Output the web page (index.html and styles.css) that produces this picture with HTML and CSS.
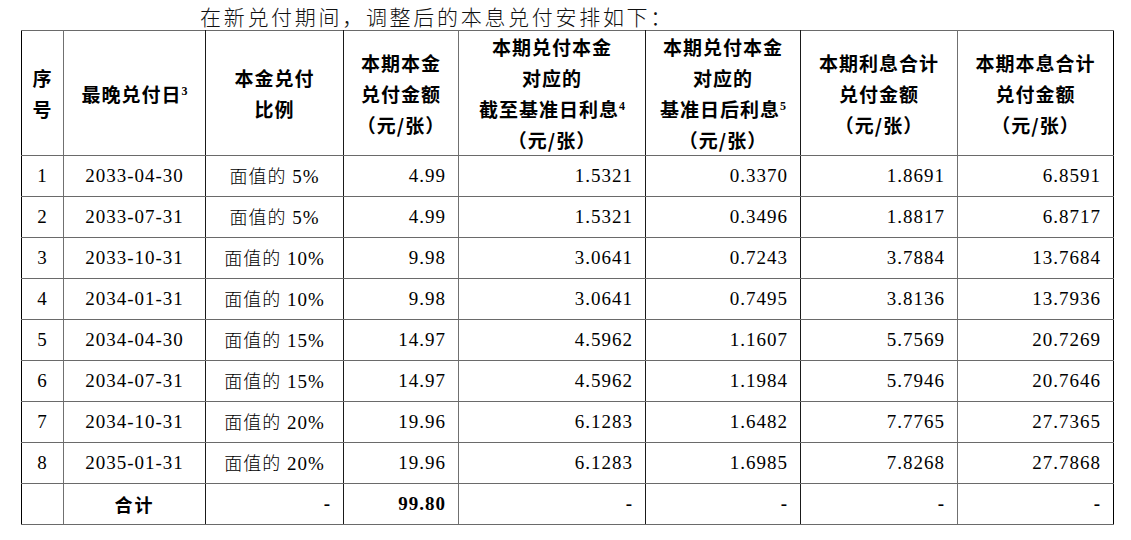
FILE: index.html
```html
<!DOCTYPE html>
<html lang="zh">
<head>
<meta charset="utf-8">
<link rel="stylesheet" href="styles.css">
</head>
<body>
<div class="page">
  <p class="intro">在新兑付期间，调整后的本息兑付安排如下：</p>
  <table class="sched">
    <colgroup>
      <col class="c1"><col class="c2"><col class="c3"><col class="c4"><col class="c5"><col class="c6"><col class="c7"><col class="c8">
    </colgroup>
    <thead>
      <tr>
        <th class="v-gray">序<br>号</th>
        <th class="v-dark">最晚兑付日<sup>3</sup></th>
        <th class="v-dark">本金兑付<br>比例</th>
        <th class="v-gray">本期本金<br>兑付金额<br>（元/张）</th>
        <th class="v-dark">本期兑付本金<br>对应的<br>截至基准日利息<sup>4</sup><br>（元/张）</th>
        <th class="v-dark">本期兑付本金<br>对应的<br>基准日后利息<sup>5</sup><br>（元/张）</th>
        <th class="v-gray">本期利息合计<br>兑付金额<br>（元/张）</th>
        <th>本期本息合计<br>兑付金额<br>（元/张）</th>
      </tr>
    </thead>
    <tbody>
      <tr><td class="ctr v-gray">1</td><td class="ctr v-dark">2033-04-30</td><td class="ctr v-dark"><span class="han">面值的</span> 5%</td><td class="num v-gray">4.99</td><td class="num v-dark">1.5321</td><td class="num v-dark">0.3370</td><td class="num v-gray">1.8691</td><td class="num">6.8591</td></tr>
      <tr><td class="ctr v-gray">2</td><td class="ctr v-dark">2033-07-31</td><td class="ctr v-dark"><span class="han">面值的</span> 5%</td><td class="num v-gray">4.99</td><td class="num v-dark">1.5321</td><td class="num v-dark">0.3496</td><td class="num v-gray">1.8817</td><td class="num">6.8717</td></tr>
      <tr><td class="ctr v-gray">3</td><td class="ctr v-dark">2033-10-31</td><td class="ctr v-dark"><span class="han">面值的</span> 10%</td><td class="num v-gray">9.98</td><td class="num v-dark">3.0641</td><td class="num v-dark">0.7243</td><td class="num v-gray">3.7884</td><td class="num">13.7684</td></tr>
      <tr><td class="ctr v-gray">4</td><td class="ctr v-dark">2034-01-31</td><td class="ctr v-dark"><span class="han">面值的</span> 10%</td><td class="num v-gray">9.98</td><td class="num v-dark">3.0641</td><td class="num v-dark">0.7495</td><td class="num v-gray">3.8136</td><td class="num">13.7936</td></tr>
      <tr><td class="ctr v-gray">5</td><td class="ctr v-dark">2034-04-30</td><td class="ctr v-dark"><span class="han">面值的</span> 15%</td><td class="num v-gray">14.97</td><td class="num v-dark">4.5962</td><td class="num v-dark">1.1607</td><td class="num v-gray">5.7569</td><td class="num">20.7269</td></tr>
      <tr><td class="ctr v-gray">6</td><td class="ctr v-dark">2034-07-31</td><td class="ctr v-dark"><span class="han">面值的</span> 15%</td><td class="num v-gray">14.97</td><td class="num v-dark">4.5962</td><td class="num v-dark">1.1984</td><td class="num v-gray">5.7946</td><td class="num">20.7646</td></tr>
      <tr><td class="ctr v-gray">7</td><td class="ctr v-dark">2034-10-31</td><td class="ctr v-dark"><span class="han">面值的</span> 20%</td><td class="num v-gray">19.96</td><td class="num v-dark">6.1283</td><td class="num v-dark">1.6482</td><td class="num v-gray">7.7765</td><td class="num">27.7365</td></tr>
      <tr><td class="ctr v-gray">8</td><td class="ctr v-dark">2035-01-31</td><td class="ctr v-dark"><span class="han">面值的</span> 20%</td><td class="num v-gray">19.96</td><td class="num v-dark">6.1283</td><td class="num v-dark">1.6985</td><td class="num v-gray">7.8268</td><td class="num">27.7868</td></tr>
      <tr class="total"><td class="v-gray"></td><td class="ctr label v-dark">合计</td><td class="num v-dark">-</td><td class="num v-gray">99.80</td><td class="num v-dark">-</td><td class="num v-dark">-</td><td class="num v-gray">-</td><td class="num">-</td></tr>
    </tbody>
  </table>
</div>
</body>
</html>
```

FILE: styles.css
```css
html, body {
  margin: 0;
  padding: 0;
  background: #fff;
}

.page {
  padding: 3px 0 0 21px;
  color: #000;
}

.intro {
  margin: 0 0 0 179px;
  height: 27px;
  font-family: "Noto Sans CJK SC", sans-serif;
  font-weight: 300;
  font-size: 21px;
  line-height: 26px;
  letter-spacing: 2.7px;
  color: #111;
}

.sched {
  border-collapse: collapse;
  table-layout: fixed;
  width: 1092px;
  border: 1px solid #000;
}

.c1 { width: 42px; }
.c2 { width: 142px; }
.c3 { width: 138px; }
.c4 { width: 115px; }
.c5 { width: 187px; }
.c6 { width: 155px; }
.c7 { width: 157px; }
.c8 { width: 156px; }

.sched th,
.sched td {
  padding: 0;
  border-top: 1px solid #6a6a6a;
  border-bottom: 1px solid #6a6a6a;
}

.sched th {
  height: 124px;
  font-family: "Noto Sans CJK SC", sans-serif;
  font-weight: 700;
  font-size: 19px;
  line-height: 31px;
  letter-spacing: 1px;
  text-align: center;
  vertical-align: middle;
}

.sched th sup {
  font-family: "Liberation Serif", serif;
  font-size: 12px;
  line-height: 0;
  vertical-align: 7px;
  letter-spacing: 0;
}

.sched td {
  height: 40px;
  font-family: "Liberation Serif", serif;
  font-size: 19px;
  line-height: 22px;
  letter-spacing: 1px;
  vertical-align: middle;
}

.v-gray { border-right: 1px solid #707070; }
.v-dark { border-right: 1px solid #1a1a1a; }

.ctr { text-align: center; }

.num {
  text-align: right;
  padding-right: 12px !important;
}

.han {
  font-family: "Noto Sans CJK SC", sans-serif;
  font-weight: 300;
  font-size: 18px;
  line-height: 20px;
  letter-spacing: 1px;
}

.total td {
  font-weight: 700;
}

.total .label {
  font-family: "Noto Sans CJK SC", sans-serif;
  font-size: 18px;
  letter-spacing: 2px;
}
```
